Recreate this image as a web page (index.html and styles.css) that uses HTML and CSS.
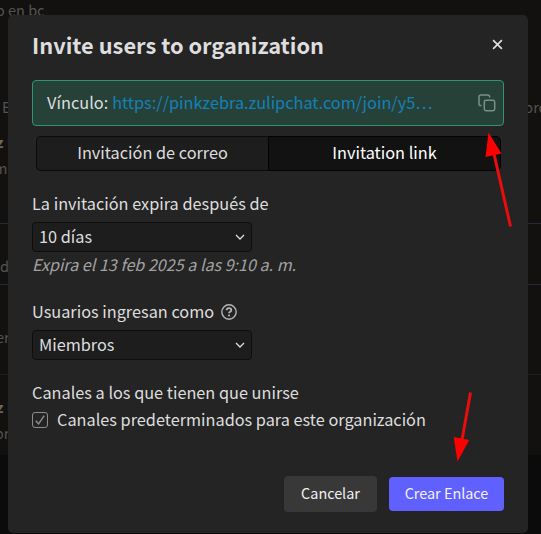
FILE: index.html
```
<!DOCTYPE html>
<html lang="es">
<head>
<meta charset="utf-8">
<title>Invite users to organization</title>
<link rel="stylesheet" href="styles.css">
</head>
<body>
<main class="feed">
  <div class="row row-top"><p>o en bc</p></div>
  <div class="row row-split"><p>E</p><p>orc</p></div>
  <div class="row row-name"><p><b>z</b> <span class="accent">l</span></p></div>
  <div class="row row-m"><p>m</p></div>
  <div class="row row-d"><p>d</p></div>
  <div class="row row-er"><p>er</p></div>
  <div class="row row-name2"><p><b>z</b> <span class="accent">l</span></p></div>
  <div class="row row-or"><p>or</p></div>
</main>
<section class="modal" role="dialog">
  <header class="modal-header">
    <h1>Invite users to organization</h1>
    <svg class="close" viewBox="0 0 10 10"><path d="M1 1 9 9M9 1 1 9"/></svg>
  </header>
  <div class="banner">
    <span class="banner-label">Vínculo:</span>
    <a class="banner-link">https://pinkzebra.zulipchat.com/join/y5…</a>
    <svg class="copy" viewBox="0 0 18 18"><path d="M3.6 11.6H2.7A1.7 1.7 0 0 1 1 9.900V2.700A1.700 1.700 0 0 1 2.700 1H9.900A1.700 1.700 0 0 1 11.600 2.700V3.400"/><rect x="6.300" y="6.300" width="10.400" height="10.400" rx="1.700"/></svg>
  </div>
  <div class="tabs">
    <div class="tab"><span class="t-mail">Invitación de correo</span></div>
    <div class="tab active"><span class="t-link">Invitation link</span></div>
  </div>
  <div class="label expires"><span>La invitación expira después de</span></div>
  <div class="select"><span>10 días</span><svg viewBox="0 0 10 6"><path d="M1 1 5 5 9 1"/></svg></div>
  <p class="hint"><span>Expira el 13 feb 2025 a las 9:10 a. m.</span></p>
  <div class="label role"><span>Usuarios ingresan como</span>
    <svg class="help" viewBox="0 0 16 16"><circle cx="8" cy="8" r="7.200"/><path class="q" d="M5.700 6.300C5.700 4.900 6.700 4.200 8 4.200S10.300 5 10.300 6.200C10.300 7.700 8 7.700 8 9.300"/><circle class="dot" cx="8" cy="11.500" r="1.100"/></svg>
  </div>
  <div class="select"><span>Miembros</span><svg viewBox="0 0 10 6"><path d="M1 1 5 5 9 1"/></svg></div>
  <div class="label channels"><span>Canales a los que tienen que unirse</span></div>
  <div class="check"><svg viewBox="0 0 16 16"><rect x=".5" y=".5" width="15" height="15" rx="2.500"/><path d="M3.800 8.800 6.600 11.900 12.200 3.600"/></svg><span>Canales predeterminados para este organización</span></div>
  <footer class="actions">
    <button class="btn cancel">Cancelar</button>
    <button class="btn create">Crear Enlace</button>
  </footer>
</section>
<svg class="arrows" viewBox="0 0 541 534">
  <path class="shaft" d="M510.500 226.500 494 154M470.500 392.500 462 440"/>
  <path class="head" d="M488.500 132.500 501.500 153.500 485.500 157ZM457.500 461.500 453.700 437 469.300 440Z"/>
</svg>
</body>
</html>
```

FILE: styles.css
```
* { box-sizing: border-box; }
body {
  margin: 0;
  width: 541px;
  height: 534px;
  overflow: hidden;
  position: relative;
  background: #0b0b0b;
  color: #dedede;
  font: 16.3px/22px "Noto Sans CJK JP", "Noto Sans", sans-serif;
}
p, h1 { margin: 0; }
svg { fill: none; display: block; flex: none; }
span, a { white-space: nowrap; }

.feed { height: 455px; background: #12110f; color: #55534f; font-size: 14.5px; }
.row { display: flex; justify-content: space-between; line-height: 20px; white-space: nowrap; }
.row b { color: #6d655a; }
.row-top { height: 97px; margin-left: -4px; }
.row-split { height: 35px; padding-left: 2px; }
.row-split p:last-child { margin-right: -5px; }
.row-name { height: 26px; margin-left: -4px; }
.row-m { height: 66px; margin: 0 0 32px -6px; border-bottom: 1px solid #252b38; }
.row-d { height: 29px; border-bottom: 1px solid #252b38; margin-bottom: 42px; }
.row-er { height: 48px; margin: 0 0 22px -4px; border-bottom: 1px solid #201f1d; }
.row-name2 { height: 26px; margin-left: -4px; }
.row-or { height: 32px; margin-left: -5px; }
.accent { color: #24364e; }

.modal {
  position: absolute;
  left: 8px;
  top: 15px;
  width: 520px;
  height: 518px;
  padding: 15px 24px 0;
  border-radius: 5px;
  background: #242424;
}
.modal-header { display: flex; justify-content: space-between; height: 50px; }
h1 { font-size: 21.8px; line-height: 30px; font-weight: 700; }
.close { width: 11px; height: 11px; margin: 9px 1px 0 0; stroke: #dedede; stroke-width: 1.5; }
.banner {
  display: flex;
  align-items: center;
  height: 46px;
  padding: 0 7px 3px 14px;
  border: 1px solid #2f9472;
  border-radius: 4px;
  background: #264238;
}
.banner-link { margin-left: 4px; color: #1580b8; }
.copy { width: 18px; height: 18px; margin: 2px 0 0 auto; stroke: #7c8e88; stroke-width: 1.5; }
.tabs {
  display: grid;
  grid-template-columns: 232px 233px;
  width: 465px;
  height: 35px;
  margin: 10px 0 0 4px;
}
.tab {
  display: flex;
  justify-content: center;
  align-items: center;
  padding-bottom: 3px;
  border: 1px solid #0b0b0b;
  border-right: 0;
  border-radius: 5px 0 0 5px;
  background: #1d1d1d;
}
.tab.active { border: 1px solid #020202; border-radius: 0 5px 5px 0; background: #121212; color: #fff; }
.label { display: flex; height: 22px; }
.expires { margin: 21px 0 8px; }
.select {
  display: flex;
  align-items: center;
  justify-content: space-between;
  width: 220px;
  height: 30px;
  padding: 0 6px 2px;
  border: 1px solid #0d0d0d;
  border-radius: 4px;
  background: #1d1d1d;
}
.select svg { width: 10px; height: 6px; margin-top: 1px; stroke: #dedede; stroke-width: 1.3; }
.hint { height: 22px; margin-top: 1px; font-size: 16.1px; font-style: italic; color: #a2a2a2; }
.role { margin: 25px 0 8px; }
.help { width: 16px; height: 16px; margin: 4px 0 0 7px; stroke: #b5b5b5; stroke-width: 1.4; }
.help .q { stroke-width: 1.8; }
.help .dot { fill: #b5b5b5; stroke: none; }
.channels { margin: 21px 0 5px; }
.check { display: flex; align-items: center; height: 22px; gap: 9px; }
.check svg { width: 16px; height: 16px; margin-top: 2px; stroke: #8c8c8c; stroke-width: 1; }
.check path { stroke-width: 1.5; }
.actions { display: flex; justify-content: flex-end; align-items: center; gap: 12px; height: 36px; margin-top: 46px; }
.btn {
  padding: 0 0 2px;
  border: 0;
  border-radius: 4px;
  color: #f2f2f2;
  font: 14.4px/20px "Noto Sans CJK JP", "Noto Sans", sans-serif;
}
.cancel { width: 93px; height: 36px; background: #383838; }
.create { width: 115px; height: 34px; background: #6060ff; }

.arrows { position: absolute; left: 0; top: 0; width: 541px; height: 534px; }
.shaft { stroke: #e90d0d; stroke-width: 3; }
.head { fill: #f00; }
```
